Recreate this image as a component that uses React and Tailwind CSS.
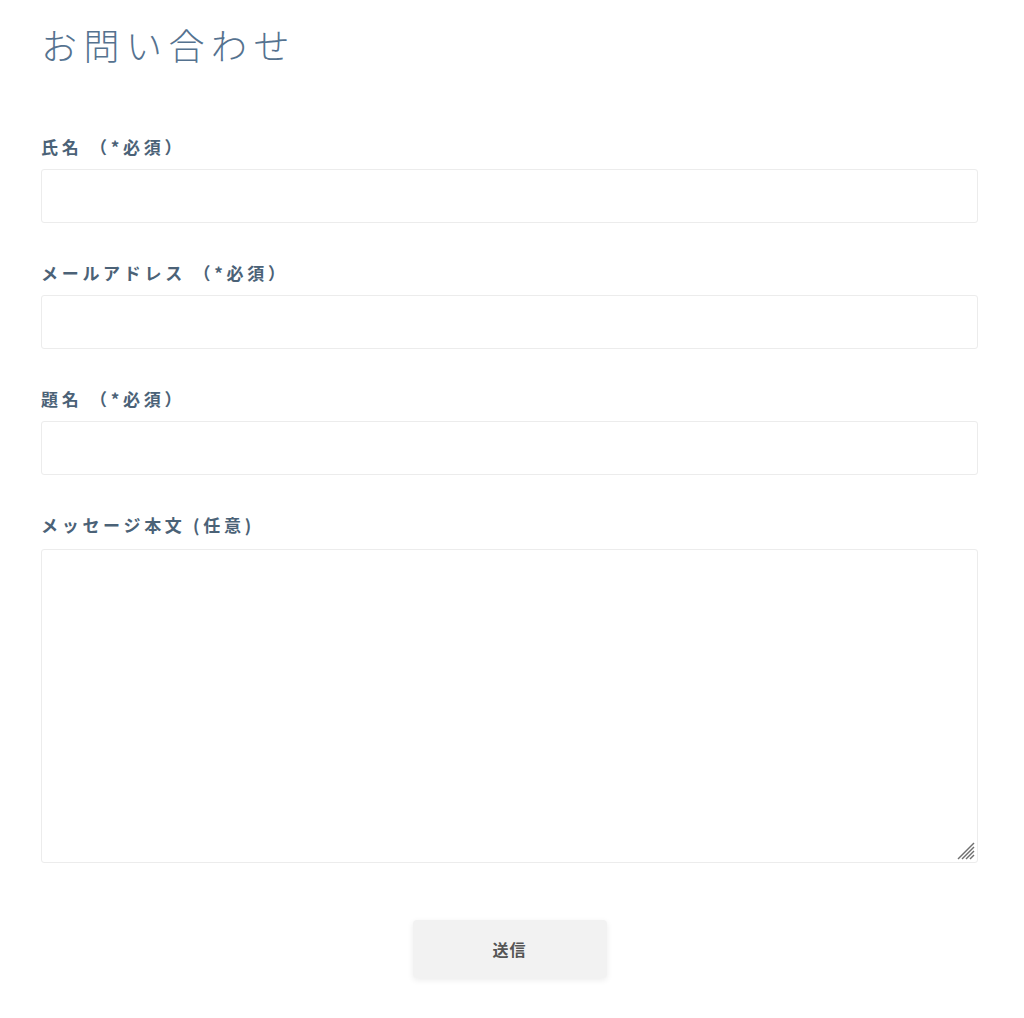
import React from "react";

const fields = [
  {label: "氏名 （*必須）"},
  {label: "メールアドレス （*必須）"},
  {label: "題名 （*必須）"},
];

const App = () => {
  return (
    <div
      className="min-h-[1018px] bg-white"
      style={{fontFamily: '"Noto Sans CJK JP", "Noto Sans", sans-serif'}}
    >
      <div className="ml-[41px] w-[937px] pt-[20px]">
        <h1 className="text-[36px] leading-[48px] font-light tracking-[6.5px] text-[#55728f]">
          お問い合わせ
        </h1>

        <form className="mt-[67px]">
          {fields.map((f) => (
            <div key={f.label} className="mb-[38px]">
              <label className="block text-[17px] leading-[24px] font-bold tracking-[3.7px] text-[#4b6277] mb-[10px]">
                {f.label}
              </label>
              <input
                type="text"
                className="block w-full h-[54px] border border-[#ececec] rounded-[3px] bg-white outline-none"
              />
            </div>
          ))}

          <div>
            <label className="block text-[17px] leading-[24px] font-bold tracking-[3.7px] text-[#4b6277] mb-[12px]">
              メッセージ本文 (任意)
            </label>
            <div className="relative">
              <textarea className="block w-full h-[314px] border border-[#ececec] rounded-[3px] bg-white outline-none resize-none" />
              <svg
                className="absolute right-[2px] bottom-[2px]"
                width="20"
                height="20"
                viewBox="0 0 20 20"
              >
                <g stroke="#6f6f6f" strokeWidth="1.5">
                  <line x1="2" y1="18" x2="18" y2="2" />
                  <line x1="6" y1="18" x2="18" y2="6" />
                  <line x1="10" y1="18" x2="18" y2="10" />
                  <line x1="14" y1="18" x2="18" y2="14" />
                </g>
              </svg>
            </div>
          </div>

          <div className="flex justify-center mt-[57px]">
            <button
              type="button"
              className="w-[194px] h-[58px] bg-[#f2f2f2] rounded-[4px] shadow-[0_2px_6px_rgba(0,0,0,0.08)] text-[16px] font-bold text-[#555] tracking-[1px]"
            >
              送信
            </button>
          </div>
        </form>
      </div>
    </div>
  );
};

export default App;
